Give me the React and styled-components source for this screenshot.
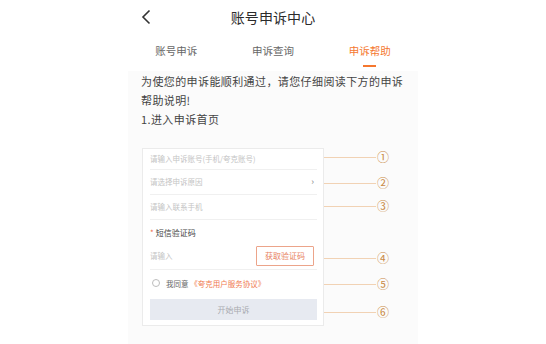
import React from 'react';
import styled, { createGlobalStyle } from 'styled-components';

const GlobalStyle = createGlobalStyle`
  html, body {
    margin: 0;
    padding: 0;
    background: #ffffff;
  }
  body {
    font-family: "Noto Sans CJK SC", "Noto Sans", sans-serif;
    color: #333;
  }
`;

const TABS = ['账号申诉', '申诉查询', '申诉帮助'];

const FORM_NOTES = [
  { num: '①', top: 3.7 },
  { num: '②', top: 14.3 },
  { num: '③', top: 11 },
  { num: '④', top: 40 },
  { num: '⑤', top: 14 },
  { num: '⑥', top: 16 },
];

const Page = styled.div`
  width: 290px;
  margin-left: 128px;
  height: 344px;
  overflow: hidden;
`;

const Header = styled.div`
  height: 34px;
  display: grid;
  grid-template-columns: 1fr auto 1fr;
  align-items: center;
`;

const Back = styled.div`
  padding-left: 13px;
  display: flex;
  align-items: center;
`;

const Title = styled.div`
  font-size: 14px;
  line-height: 18px;
  color: #2b2b2b;
  letter-spacing: 0.1px;
`;

const TabBar = styled.div`
  height: 36px;
  display: grid;
  grid-template-columns: repeat(3, 1fr);
`;

const Tab = styled.div`
  display: flex;
  flex-direction: column;
  align-items: center;
  padding-top: 10px;
  gap: 7px;
  font-size: 10.5px;
  line-height: 14px;
  color: ${(p) => (p.active ? '#f5772e' : '#666')};
`;

const Underline = styled.div`
  width: 13px;
  height: 2px;
  background: ${(p) => (p.active ? '#f5772e' : 'transparent')};
`;

const Panel = styled.div`
  margin-top: 1px;
  background: #fbfbfb;
  padding: 1px 10px 0 13px;
  height: 280px;
`;

const Intro = styled.p`
  margin: 0;
  font-size: 11px;
  letter-spacing: 0.4px;
  line-height: 19px;
  color: #444;
`;

const Figure = styled.div`
  display: flex;
  align-items: flex-start;
  margin-top: 18.5px;
  margin-left: 1px;
`;

const Card = styled.div`
  width: 182px;
  box-sizing: border-box;
  border: 1px solid #ebebeb;
  background: #fff;
  padding: 0 6px 5px 7px;
`;

const Row = styled.div`
  height: ${(p) => p.h}px;
  display: flex;
  align-items: center;
  justify-content: space-between;
  border-bottom: ${(p) => (p.line ? '1px solid #f0f0f0' : 'none')};
  padding-bottom: ${(p) => p.pb || 0}px;
`;

const Placeholder = styled.span`
  font-size: 7.5px;
  color: #c4c4c4;
  white-space: nowrap;
`;

const Arrow = styled.span`
  font-size: 9px;
  color: #888;
  margin-right: 3px;
`;

const Label = styled.span`
  font-size: 8px;
  color: #444;
  &::before {
    content: '*';
    color: #f06a4a;
    margin-right: 2px;
  }
`;

const CodeButton = styled.div`
  width: 58px;
  height: 20px;
  box-sizing: border-box;
  border: 1px solid #eca48a;
  border-radius: 1px;
  display: flex;
  align-items: center;
  justify-content: center;
  font-size: 8px;
  color: #e8825f;
  margin-right: 3px;
`;

const Agree = styled.div`
  display: flex;
  align-items: center;
  gap: 6px;
  padding-left: 2px;
  font-size: 7.5px;
  color: #666;
`;

const Radio = styled.span`
  width: 6px;
  height: 6px;
  border-radius: 50%;
  border: 1px solid #bdbdbd;
`;

const Link = styled.span`
  color: #f07a4f;
`;

const Submit = styled.div`
  margin-top: 2px;
  height: 21px;
  background: #e7eaf1;
  display: flex;
  align-items: center;
  justify-content: center;
  font-size: 8px;
  color: #a9abb0;
`;

const Notes = styled.div`
  display: flex;
  flex-direction: column;
`;

const Note = styled.div`
  margin-top: ${(p) => p.top}px;
  height: 12px;
  display: flex;
  align-items: center;
`;

const Leader = styled.div`
  width: 52px;
  height: 1px;
  background: #f1d2b4;
`;

const Num = styled.span`
  margin-left: 1px;
  font-size: 12px;
  line-height: 12px;
  color: #c98a45;
`;

function ChevronLeft() {
  return (
    <svg width="10" height="16" viewBox="0 0 10 16">
      <path d="M8.5 1.5 L2 8 L8.5 14.5" fill="none" stroke="#333" strokeWidth="1.6" />
    </svg>
  );
}

export default function App() {
  return (
    <>
      <GlobalStyle />
      <Page>
        <Header>
          <Back>
            <ChevronLeft />
          </Back>
          <Title>账号申诉中心</Title>
          <div />
        </Header>
        <TabBar>
          {TABS.map((t, i) => (
            <Tab key={t} active={i === 2}>
              {t}
              <Underline active={i === 2} />
            </Tab>
          ))}
        </TabBar>
        <Panel>
          <Intro>
            为使您的申诉能顺利通过，请您仔细阅读下方的申诉帮助说明!
            <br />
            1.进入申诉首页
          </Intro>
          <Figure>
            <Card>
              <Row h={20} line>
                <Placeholder>请输入申诉账号(手机/夸克账号)</Placeholder>
              </Row>
              <Row h={24} line>
                <Placeholder>请选择申诉原因</Placeholder>
                <Arrow>›</Arrow>
              </Row>
              <Row h={24} line>
                <Placeholder>请输入联系手机</Placeholder>
              </Row>
              <Row h={26}>
                <Label>短信验证码</Label>
              </Row>
              <Row h={20} pb={3} line>
                <Placeholder>请输入</Placeholder>
                <CodeButton>获取验证码</CodeButton>
              </Row>
              <Row h={27}>
                <Agree>
                  <Radio />
                  <span>
                    我同意 <Link>《夸克用户服务协议》</Link>
                  </span>
                </Agree>
              </Row>
              <Submit>开始申诉</Submit>
            </Card>
            <Notes>
              {FORM_NOTES.map((n) => (
                <Note key={n.num} top={n.top}>
                  <Leader />
                  <Num>{n.num}</Num>
                </Note>
              ))}
            </Notes>
          </Figure>
        </Panel>
      </Page>
    </>
  );
}
